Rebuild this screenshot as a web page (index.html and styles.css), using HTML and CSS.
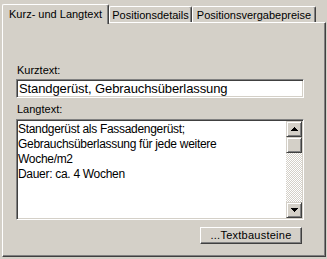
FILE: index.html
```html
<!DOCTYPE html>
<html lang="de">
<head>
<meta charset="utf-8">
<title>Kurz- und Langtext</title>
<link rel="stylesheet" href="styles.css">
</head>
<body>
<div class="dialog">
  <div class="tabs">
    <div class="tab active">Kurz- und Langtext</div>
    <div class="tab t2">Positionsdetails</div>
    <div class="tab t3">Positionsvergabepreise</div>
  </div>
  <div class="panel">
    <div class="label">Kurztext:</div>
    <div class="edit">Standgerüst, Gebrauchsüberlassung</div>
    <div class="label label2">Langtext:</div>
    <div class="memo">
      <div class="memo-text">Standgerüst als Fassadengerüst;<br>Gebrauchsüberlassung für jede weitere<br>Woche/m2<br>Dauer: ca. 4 Wochen</div>
      <div class="vscroll">
        <div class="sbtn"><svg width="7" height="4" viewBox="0 0 7 4"><path d="M3 0h1v1H3zM2 1h3v1H2zM1 2h5v1H1zM0 3h7v1H0z" fill="#000"/></svg></div>
        <div class="track"><div class="thumb"></div></div>
        <div class="sbtn"><svg width="7" height="4" viewBox="0 0 7 4"><path d="M0 0h7v1H0zM1 1h5v1H1zM2 2h3v1H2zM3 3h1v1H3z" fill="#000"/></svg></div>
      </div>
    </div>
    <div class="actions"><div class="button">...Textbausteine</div></div>
  </div>
</div>
</body>
</html>
```
FILE: styles.css
```css
html, body {
  margin: 0;
  padding: 0;
}
body {
  background: #d4d0c8;
  font-family: "Liberation Sans", Arial, sans-serif;
  font-size: 11px;
  line-height: 13px;
  color: #000;
  width: 327px;
  height: 259px;
  overflow: hidden;
}
.tabs {
  display: flex;
  align-items: flex-end;
  height: 22px;
  padding-left: 2px;
}
.tab {
  box-sizing: border-box;
  height: 16px;
  border: 1px solid #fff;
  border-bottom: 0;
  border-right-color: #404040;
  box-shadow: inset -1px 0 #808080;
  border-radius: 2px 2px 0 0;
  padding-top: 2px;
  text-align: center;
  white-space: nowrap;
  background: #d4d0c8;
}
.tab.active {
  width: 107px;
  height: 20px;
  margin-bottom: -2px;
  padding-top: 3px;
  position: relative;
  z-index: 1;
}
.t2 { width: 83px; }
.t3 { width: 124px; }
.panel {
  box-sizing: border-box;
  margin-left: 2px;
  width: 324px;
  height: 235px;
  border: 1px solid;
  border-color: #fff #404040 #404040 #fff;
  box-shadow: inset -1px -1px #808080;
  padding: 41px 21px 0 13px;
}
.label {
  padding-left: 1px;
  height: 13px;
}
.label2 {
  margin-top: 5px;
}
.edit {
  box-sizing: border-box;
  height: 19px;
  margin-top: 2px;
  background: #fff;
  border: 1px solid;
  border-color: #808080 #fff #fff #808080;
  box-shadow: inset 1px 1px #404040, inset -1px -1px #d4d0c8;
  padding: 1px 0 0 2px;
  font-size: 13px;
  line-height: 15px;
  letter-spacing: -0.1px;
  white-space: nowrap;
  overflow: hidden;
}
.memo {
  box-sizing: border-box;
  display: flex;
  height: 101px;
  margin-top: 3px;
  background: #fff;
  border: 1px solid;
  border-color: #808080 #fff #fff #808080;
  box-shadow: inset 1px 1px #404040, inset -1px -1px #d4d0c8;
  padding: 1px;
}
.memo-text {
  flex: 1;
  font-size: 12px;
  line-height: 15px;
  letter-spacing: -0.3px;
  padding-top: 1px;
  white-space: nowrap;
  overflow: hidden;
}
.vscroll {
  width: 16px;
  display: flex;
  flex-direction: column;
}
.sbtn, .thumb {
  box-sizing: border-box;
  height: 16px;
  background: #d4d0c8;
  border: 1px solid;
  border-color: #d4d0c8 #404040 #404040 #d4d0c8;
  box-shadow: inset 1px 1px #fff, inset -1px -1px #808080;
  display: flex;
  align-items: center;
  justify-content: center;
}
.sbtn svg {
  display: block;
}
.track {
  flex: 1;
  background: repeating-conic-gradient(#fff 0 25%, #d4d0c8 0 50%) 0 0 / 2px 2px;
}
.actions {
  display: flex;
  justify-content: flex-end;
  margin-top: 7px;
  padding-right: 2px;
}
.button {
  box-sizing: border-box;
  width: 102px;
  height: 17px;
  border: 1px solid;
  border-color: #fff #404040 #404040 #fff;
  box-shadow: inset -1px -1px #808080;
  text-align: center;
  line-height: 15px;
  letter-spacing: 0.25px;
  white-space: nowrap;
}
```
